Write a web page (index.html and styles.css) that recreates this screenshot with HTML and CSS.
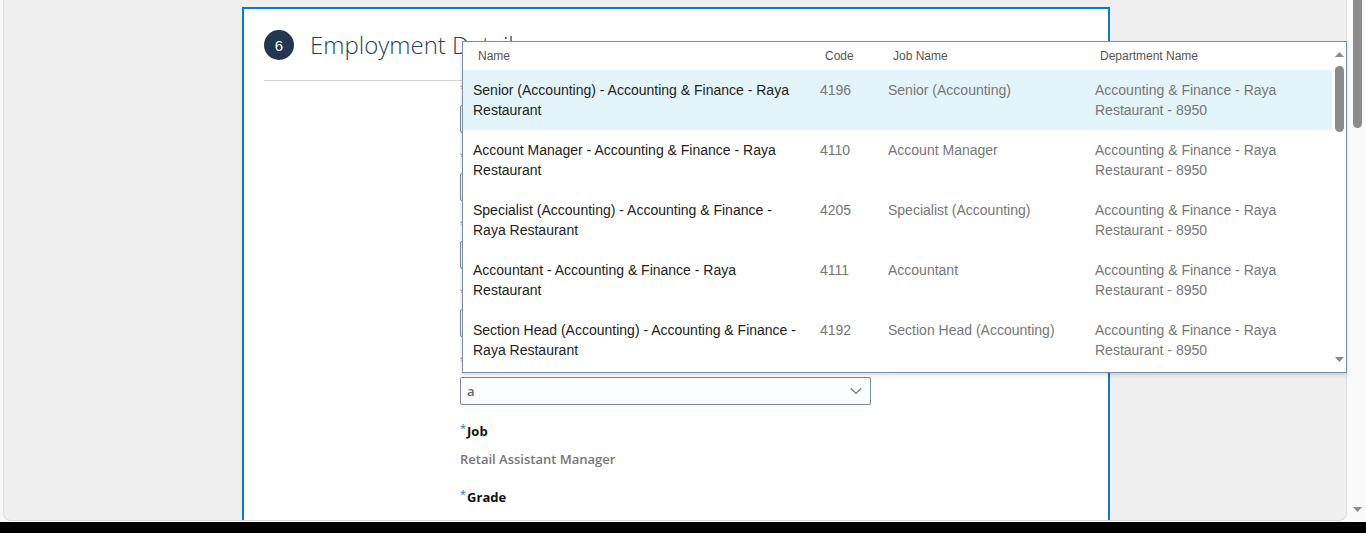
FILE: index.html
```html
<!DOCTYPE html>
<html lang="en">
<head>
<meta charset="utf-8">
<title>Employment Details</title>
<link rel="stylesheet" href="styles.css">
</head>
<body>
<div class="viewport">
  <div class="screen">
    <div class="page">
      <div class="container">
        <section class="card">
          <header class="card-head">
            <span class="step">6</span>
            <h2 class="title">Employment Details</h2>
          </header>
          <div class="form">
            <div class="field"><div class="label"><span class="req hidden-req">*</span></div><div class="input"></div></div>
            <div class="field"><div class="label"><span class="req hidden-req">*</span></div><div class="input"></div></div>
            <div class="field"><div class="label"><span class="req hidden-req">*</span></div><div class="input"></div></div>
            <div class="field"><div class="label"><span class="req hidden-req">*</span></div><div class="input"></div></div>
            <div class="field"><div class="label"><span class="req hidden-req">*</span></div>
              <div class="input select"><span class="input-text">a</span>
                <svg class="chev" width="12" height="8" viewBox="0 0 12 8"><path d="M1 1.5 L6 6.5 L11 1.5" fill="none" stroke="#777" stroke-width="1.2"/></svg>
              </div>
            </div>
            <div class="field static"><label class="label"><span class="req">*</span>Job</label><div class="value">Retail Assistant Manager</div></div>
            <div class="field static"><label class="label"><span class="req">*</span>Grade</label></div>
          </div>
        </section>
      </div>
    </div>
    <div class="vscroll">
      <div class="vthumb"></div>
      <div class="vtrack"></div>
      <svg class="varrow" width="9" height="5" viewBox="0 0 9 5"><path d="M0 0 H9 L4.5 5 Z" fill="#8a8a8a"/></svg>
    </div>

    <div class="popup">
      <div class="popup-table">
        <div class="row head">
          <div class="cell">Name</div><div class="cell">Code</div><div class="cell">Job Name</div><div class="cell">Department Name</div>
        </div>
        <div class="rows">
          <div class="row item active">
            <div class="cell name">Senior (Accounting) - Accounting &amp; Finance - Raya Restaurant</div>
            <div class="cell">4196</div><div class="cell">Senior (Accounting)</div>
            <div class="cell">Accounting &amp; Finance - Raya Restaurant - 8950</div>
          </div>
          <div class="row item">
            <div class="cell name">Account Manager - Accounting &amp; Finance - Raya Restaurant</div>
            <div class="cell">4110</div><div class="cell">Account Manager</div>
            <div class="cell">Accounting &amp; Finance - Raya Restaurant - 8950</div>
          </div>
          <div class="row item">
            <div class="cell name">Specialist (Accounting) - Accounting &amp; Finance - Raya Restaurant</div>
            <div class="cell">4205</div><div class="cell">Specialist (Accounting)</div>
            <div class="cell">Accounting &amp; Finance - Raya Restaurant - 8950</div>
          </div>
          <div class="row item">
            <div class="cell name">Accountant - Accounting &amp; Finance - Raya Restaurant</div>
            <div class="cell">4111</div><div class="cell">Accountant</div>
            <div class="cell">Accounting &amp; Finance - Raya Restaurant - 8950</div>
          </div>
          <div class="row item">
            <div class="cell name">Section Head (Accounting) - Accounting &amp; Finance - Raya Restaurant</div>
            <div class="cell">4192</div><div class="cell">Section Head (Accounting)</div>
            <div class="cell">Accounting &amp; Finance - Raya Restaurant - 8950</div>
          </div>
        </div>
      </div>
      <div class="pscroll">
        <svg class="parrow" width="9" height="5" viewBox="0 0 9 5"><path d="M0 5 H9 L4.5 0 Z" fill="#8a8a8a"/></svg>
        <div class="pthumb"></div>
        <div class="ptrack"></div>
        <svg class="parrow" width="9" height="5" viewBox="0 0 9 5"><path d="M0 0 H9 L4.5 5 Z" fill="#8a8a8a"/></svg>
      </div>
    </div>
  </div>
  <div class="footer"></div>
</div>
</body>
</html>
```

FILE: styles.css
```css
* { box-sizing: border-box; }
html, body { margin: 0; padding: 0; }
body { background: #000; font-family: "Open Sans", "Noto Sans", sans-serif; }

.viewport { width: 1366px; height: 533px; display: flex; flex-direction: column; overflow: hidden; }
.screen { position: relative; height: 522px; display: flex; background: #f8f8f8; }
.footer { height: 11px; background: #000; }

.page { flex: 1; padding-left: 3px; height: 522px; }
.container {
  height: 521px;
  background: #f0f0f0;
  border: 1px solid #dcdcdc;
  border-top: none;
  border-radius: 0 0 8px 8px;
  overflow: hidden;
  padding-left: 238px;
  padding-top: 7px;
}

.card {
  width: 868px;
  height: 520px;
  background: #fff;
  border: 2px solid #0b79d0;
  border-bottom: none;
}
.card-head {
  display: flex;
  align-items: center;
  gap: 16px;
  margin: 0 20px;
  padding: 21px 0 20px;
  border-bottom: 1px solid #d4d4d4;
}
.step {
  width: 30px; height: 30px; border-radius: 50%;
  background: #22364f; color: #fff;
  display: flex; align-items: center; justify-content: center;
  font-family: "Liberation Sans", Arial, sans-serif; font-size: 15px;
}
.title {
  margin: 0;
  font-family: "Open Sans", sans-serif;
  font-weight: 300;
  font-size: 24px;
  line-height: 30px;
  color: #2b3f58;
}

.form { padding-left: 216px; padding-top: 0; }
.field { margin-bottom: 16px; }
.label {
  display: block;
  height: 20px; line-height: 20px;
  font-size: 13px; font-weight: 700; color: #111;
  margin-bottom: 4px;
}
.req { color: #1a74c8; font-size: 11px; vertical-align: top; line-height: 14px; margin-right: 1px; font-weight: 400; }
.hidden-req { color: #d9534f; }
.input {
  width: 411px; height: 28px;
  border: 1px solid #7d8c9a;
  border-radius: 2px;
  background: #fff;
}
.select {
  display: flex; align-items: center; justify-content: space-between;
  padding: 0 8px 0 6px;
  background: #fcfdfe;
}
.input-text { font-size: 13px; font-weight: 600; color: #666; }
.chev { display: block; }
.field.static .label { margin-bottom: 8px; }
.field.static { margin-bottom: 18px; }
.value { font-size: 13px; font-weight: 600; color: #767676; line-height: 20px; }

.vscroll {
  width: 19px;
  height: 522px;
  display: flex; flex-direction: column; align-items: center;
  padding: 0 0 10px 2px;
  background: #fafafa;
}
.vthumb { width: 9px; height: 128px; background: #8c8c8c; border-radius: 0 0 5px 5px; }
.vtrack { flex: 1; }
.varrow { display: block; }

.popup {
  position: absolute;
  left: 462px; top: 41px;
  width: 885px; height: 332px;
  background: #fff;
  border: 1px solid #7b8fa3;
  box-shadow: 0 2px 4px rgba(0,0,0,0.15);
  display: flex;
  font-family: "Liberation Sans", Arial, sans-serif;
  overflow: hidden;
}
.popup-table { flex: 1; overflow: hidden; }
.row { display: grid; grid-template-columns: 347px 68px 207px 1fr; }
.row.head { height: 28px; align-items: center; font-size: 12px; color: #555; }
.row.head .cell { padding-left: 15px; }
.row.item { height: 60px; padding: 10px 0; font-size: 14px; line-height: 20px; color: #777; }
.row.item .cell { padding: 0 10px; }
.row.item .cell.name { color: #222; padding-right: 7px; }
.row.item .cell:last-child { padding-right: 40px; }
.row.active { background: #e3f4fa; }

.pscroll {
  width: 14px;
  display: flex; flex-direction: column; align-items: center;
  padding: 10px 0 10px;
}
.parrow { display: block; flex: none; }
.pthumb { width: 9px; height: 66px; margin-top: 9px; background: #8a8a8a; border-radius: 5px; }
.ptrack { flex: 1; }
```
